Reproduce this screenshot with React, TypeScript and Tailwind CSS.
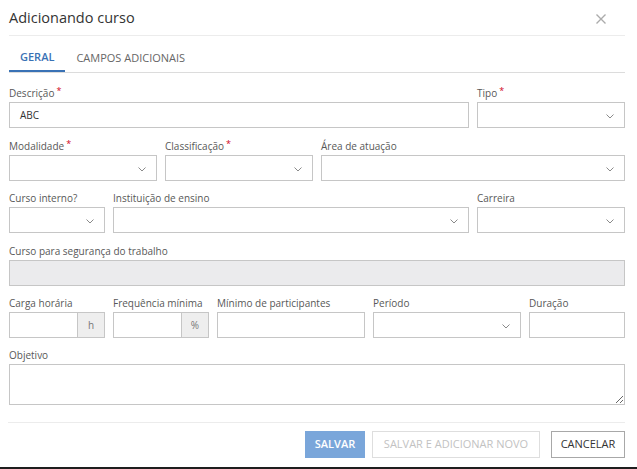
import type { ReactNode } from 'react'

function Label({ text, required }: { text: string; required?: boolean }) {
  return (
    <div className="h-[17px] leading-[17px] text-[10px] text-[#585858] whitespace-nowrap">
      {text}
      {required ? (
        <span className="ml-[2px] text-[#d0021b] text-[9px] relative top-[-3px]">*</span>
      ) : null}
    </div>
  )
}

function Chevron() {
  return (
    <svg width="8" height="5" viewBox="0 0 8 5" className="absolute right-[10px] top-[11px]">
      <path d="M0.5 0.5 L4 4 L7.5 0.5" fill="none" stroke="#8a8a8a" strokeWidth="1" />
    </svg>
  )
}

function Field({
  label,
  required,
  span,
  children,
}: {
  label: string
  required?: boolean
  span: string
  children: ReactNode
}) {
  return (
    <div className={span}>
      <Label text={label} required={required} />
      {children}
    </div>
  )
}

function Input({ value = '', disabled = false }: { value?: string; disabled?: boolean }) {
  return (
    <div
      className={`h-[26px] border border-[#c6c6c6] pl-[10px] flex items-center text-[10px] text-[#333] ${
        disabled ? 'bg-[#ebebed]' : 'bg-white'
      }`}
    >
      {value}
    </div>
  )
}

function Select() {
  return <div className="h-[26px] border border-[#c6c6c6] bg-white relative"><Chevron /></div>
}

function Addon({ unit }: { unit: string }) {
  return (
    <div className="h-[26px] border border-[#c6c6c6] bg-white flex">
      <div className="flex-1" />
      <div className="w-[27px] border-l border-[#c6c6c6] bg-[#eeeeee] flex items-center justify-center text-[10px] text-[#777]">
        {unit}
      </div>
    </div>
  )
}

export default function App() {
  return (
    <div className="w-[637px] h-[469px] bg-white font-['Open_Sans',sans-serif] flex flex-col overflow-hidden">
      <div className="flex-1 pl-[9px] pr-[12px]">
        {/* header */}
        <div className="h-[35px] flex items-center justify-between border-b border-[#ececec] box-content">
          <div className="text-[14.5px] text-[#333] pt-[1px]">Adicionando curso</div>
          <svg width="10" height="10" viewBox="0 0 10 10" className="mr-[19px] mt-[2px]">
            <path d="M0.5 0.5 L9.5 9.5 M9.5 0.5 L0.5 9.5" stroke="#ababab" strokeWidth="1.4" />
          </svg>
        </div>

        {/* tabs */}
        <div className="mt-[8px] flex border-b border-[#dcdcdc]">
          <div className="h-[28px] px-[11px] flex items-center text-[11px] font-semibold text-[#3a72b5] border-b-2 border-[#3a72b5] -mb-px">
            GERAL
          </div>
          <div className="h-[28px] px-[11px] flex items-center text-[11px] text-[#666]">
            CAMPOS ADICIONAIS
          </div>
        </div>

        {/* form */}
        <div className="pt-[12px]">
          <div className="grid grid-cols-12 gap-x-2">
            <Field label="Descrição" required span="col-span-9">
              <Input value="ABC" />
            </Field>
            <Field label="Tipo" required span="col-span-3">
              <Select />
            </Field>
          </div>

          <div className="grid grid-cols-12 gap-x-2 mt-[10px]">
            <Field label="Modalidade" required span="col-span-3">
              <Select />
            </Field>
            <Field label="Classificação" required span="col-span-3">
              <Select />
            </Field>
            <Field label="Área de atuação" span="col-span-6">
              <Select />
            </Field>
          </div>

          <div className="grid grid-cols-12 gap-x-2 mt-[9px]">
            <Field label="Curso interno?" span="col-span-2">
              <Select />
            </Field>
            <Field label="Instituição de ensino" span="col-span-7">
              <Select />
            </Field>
            <Field label="Carreira" span="col-span-3">
              <Select />
            </Field>
          </div>

          <div className="grid grid-cols-12 gap-x-2 mt-[10px]">
            <Field label="Curso para segurança do trabalho" span="col-span-12">
              <Input disabled />
            </Field>
          </div>

          <div className="grid grid-cols-12 gap-x-2 mt-[9px]">
            <Field label="Carga horária" span="col-span-2">
              <Addon unit="h" />
            </Field>
            <Field label="Frequência mínima" span="col-span-2">
              <Addon unit="%" />
            </Field>
            <Field label="Mínimo de participantes" span="col-span-3">
              <Input />
            </Field>
            <Field label="Período" span="col-span-3">
              <Select />
            </Field>
            <Field label="Duração" span="col-span-2">
              <Input />
            </Field>
          </div>

          <div className="mt-[9px]">
            <Label text="Objetivo" />
            <textarea className="block w-full h-[41px] border border-[#c6c6c6] bg-white outline-none" />
          </div>
        </div>

        {/* footer */}
        <div className="mt-[17px] border-t border-[#ececec] -ml-px" />
        <div className="mt-[8px] flex justify-end items-center">
          <div className="w-[60px] h-[27px] bg-[#7aa6da] text-white text-[11px] font-semibold flex items-center justify-center">
            SALVAR
          </div>
          <div className="ml-[7px] w-[168px] h-[27px] border border-[#dedede] text-[#c2c2c2] text-[11px] flex items-center justify-center">
            SALVAR E ADICIONAR NOVO
          </div>
          <div className="ml-[11px] w-[74px] h-[27px] border border-[#a8a8a8] text-[#333] text-[11px] flex items-center justify-center">
            CANCELAR
          </div>
        </div>
      </div>
      <div className="h-[2px] bg-[#1e1e1e]" />
    </div>
  )
}
